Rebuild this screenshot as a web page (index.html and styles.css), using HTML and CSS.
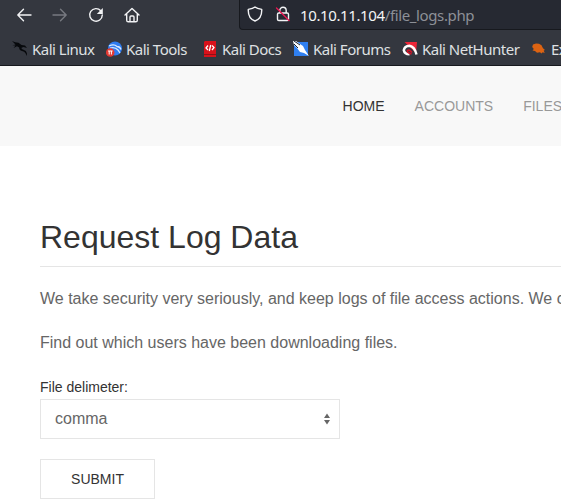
FILE: index.html
```html
<!DOCTYPE html>
<html lang="en">
<head>
<meta charset="utf-8">
<title>Request Log Data</title>
<link rel="stylesheet" href="styles.css">
</head>
<body>
<header class="browser">
  <div class="toolbar">
    <div class="controls">
      <svg class="control" viewBox="0 0 16 16"><path d="M15 8H1.8M7.5 2.3 1.8 8l5.7 5.7"/></svg>
      <svg class="control dim" viewBox="0 0 16 16"><path d="M1 8h13.2M8.5 2.3 14.2 8l-5.7 5.7"/></svg>
      <svg class="control" viewBox="0 0 16 16"><path d="M12.8 3.8A6.3 6.3 0 1 0 14.3 8"/><path class="solid" d="M14.8 1v6H8.800z"/></svg>
      <svg class="control" viewBox="0 0 16 16"><path d="M1 8 8 1.400 15 8M2.700 7v6.200q0 1.600 1.600 1.600h7.400q1.600 0 1.600-1.600V7M6 14.800V10q0-1 1-1h2q1 0 1 1v4.800"/></svg>
    </div>
    <div class="address">
      <svg class="shield" viewBox="0 0 16 16"><path d="M8 1C6.400 2.400 3.500 3.100 1.300 3.400 1 9 3.500 13.500 8 15c4.500-1.500 7-6 6.700-11.600C12.500 3.100 9.600 2.400 8 1z"/></svg>
      <svg class="lock" viewBox="0 0 16 16"><path d="M4.800 7V4.400a3.200 3.200 0 0 1 6.400 0V7M3.800 7h8.400q1.300 0 1.300 1.300v4.900q0 1.300-1.300 1.300H3.800q-1.300 0-1.300-1.300V8.300Q2.500 7 3.800 7z"/><path class="slash" d="m1.500 2 12.500 12.500"/></svg>
      <span class="url"><span class="host">10.10.11.104</span>/file_logs.php</span>
    </div>
  </div>
  <nav class="bookmarks">
    <a class="bookmark"><svg viewBox="0 0 16 16"><path d="M0 0q3 1.500 6.500 1.800L9.500 4l3.500.5L15 7l-3.500-1-2 .8q-.5 1.400 2 2 3 .8 3.500 3.700l-.3 2.500-1.200-2.800q-1-1.600-3.500-2.200-3-.8-2.800-3.500L5 5.300 1.500 7l2-2.500L.500 4.300l3-.9z" fill="#07090c"/></svg>Kali Linux</a>
    <a class="bookmark"><svg viewBox="0 0 16 16"><circle cx="9" cy="7.500" r="7" fill="#2f7cf0"/><path d="M3 5q5-2.500 8 .5 3 0 4 3M4 7q5-1.500 8 2l2 3" fill="none" stroke="#d9eaff" stroke-width="1.300"/><circle cx="4.200" cy="11.500" r="4.300" fill="#e23932"/><path d="M2 10h4.600M3.200 10v3.500M5.400 10v3.500" stroke="#fff" stroke-width="1"/></svg>Kali Tools</a>
    <a class="bookmark docs"><svg viewBox="0 0 16 16"><path d="M2 0h11v16H1V1z" fill="#d9121b"/><path d="M1 13h12v1H1z" fill="#8e1118"/><path d="M5 4.500 3 7l2 2M9 4.500 11 6.500 9 9M7.700 4l-1.400 6" stroke="#fff" stroke-width="1.300" fill="none"/></svg>Kali Docs</a>
    <a class="bookmark"><svg viewBox="0 0 16 16"><path d="M1 1h14v14H1z" fill="#2f7ff0"/><path d="M0 0h3l4 3 3 2 2 4 4 6-5-3-4-1-3-4-3-3z" fill="#fff"/><path d="m1 0 6 4M1 3l4 4" stroke="#18232e" stroke-width="1"/></svg>Kali Forums</a>
    <a class="bookmark"><svg viewBox="0 0 16 16"><path d="M2.500 1h12.500l-1 11z" fill="#ed2638"/><path d="M14.500 13.500Q12.500 5.500 7.500 4.800 2.500 5 1.800 9.200 2.500 13.200 7.500 13.200" fill="none" stroke="#fff" stroke-width="2.500"/><path d="M9.500 13Q4.500 11.500 5.500 9.500 7 8 10 11.500" fill="none" stroke="#cf1629" stroke-width="1.700"/></svg>Kali NetHunter</a>
    <a class="bookmark"><svg viewBox="0 0 16 16"><path d="m2 3.500 3-1 3 .2 2.500 1.500 1.500 3 2 1.800-1.300.5 1 2.500-2-.8-1.200 1.300-1.500-1.200-3 .5L4 10 1.500 9.500 2.800 8 1.200 6z" fill="#dc6312"/></svg>Exploit-DB</a>
  </nav>
</header>
<nav class="site-nav">
  <a class="active">HOME</a><a>ACCOUNTS</a><a>FILES</a>
</nav>
<main class="content">
  <h2>Request Log Data</h2>
  <p>We take security very seriously, and keep logs of file access actions. We can</p>
  <p>Find out which users have been downloading files.</p>
  <form>
    <label>File delimeter:</label>
    <div class="select"><span>comma</span><svg viewBox="0 0 6 12"><path d="M0 5h6L3 .5zM0 7h6l-3 4.500z"/></svg></div>
    <button type="button">SUBMIT</button>
  </form>
</main>
</body>
</html>
```

FILE: styles.css
```css
* { box-sizing: border-box; }
body { margin: 0; width: 561px; height: 501px; overflow: hidden; background: #fff; color: #666; font: 16px/24px "Liberation Sans", Arial, sans-serif; }
.browser { height: 66px; background: #34373f; border-bottom: 1px solid #17191e; color: #dfe0e2; font-family: "Noto Sans", sans-serif; overflow: hidden; }
.toolbar { display: flex; height: 30px; }
.controls { display: flex; flex: none; width: 239px; gap: 20px; padding: 7px 0 0 16px; }
.controls svg, .address svg { width: 16px; height: 16px; flex: none; fill: none; stroke: #f2f3f5; stroke-width: 1.4; stroke-linecap: round; stroke-linejoin: round; }
.controls .dim { stroke: #777a81; }
.controls .solid { fill: #f2f3f5; stroke: none; }
.address { display: flex; flex: 1; height: 30px; padding: 6px 0 0 7px; border: solid #17191e; border-width: 0 0 1px 1px; border-radius: 0 0 0 4px; background: #262932; overflow: hidden; }
.address .lock { margin-left: 12px; }
.address .slash { stroke: #e71953; }
.url { margin: -3px 0 0 9px; font-size: 15px; line-height: 24px; letter-spacing: -.38px; color: #8d9097; white-space: nowrap; }
.host { color: #f4f5f6; }
.bookmarks { display: grid; grid-template-columns: 94px 97px 90px 109px 129px 100px; padding: 4px 0 0 12px; width: 640px; }
.bookmark { display: flex; align-items: center; gap: 4px; height: 30px; font-size: 15px; line-height: 24px; letter-spacing: -.5px; white-space: nowrap; }
.bookmark svg { width: 16px; height: 16px; flex: none; }
.docs { gap: 3px; }
.site-nav { display: flex; gap: 30px; align-items: center; height: 80px; padding-left: 342.6px; background: #f8f8f8; color: #999; font-size: 14px; overflow: hidden; }
.site-nav .active { color: #333; }
.content { padding: 70px 0 0 40px; }
h2 { margin: 0 0 20px; padding-bottom: 8px; border-bottom: 1px solid #e5e5e5; color: #333; font-size: 32px; font-weight: 400; line-height: 42px; }
p { margin: 0 0 20px; white-space: nowrap; }
label { display: block; color: #333; font-size: 14px; line-height: 24px; }
.select { display: flex; align-items: center; justify-content: space-between; width: 300px; height: 40px; padding: 0 9px 0 14px; border: 1px solid #e5e5e5; }
.select svg { width: 6px; height: 12px; fill: #666; }
button { display: block; width: 115px; height: 40px; margin-top: 20px; padding: 0; border: 1px solid #e5e5e5; background: #fff; color: #333; font: 14px/38px "Liberation Sans", Arial, sans-serif; }
```
